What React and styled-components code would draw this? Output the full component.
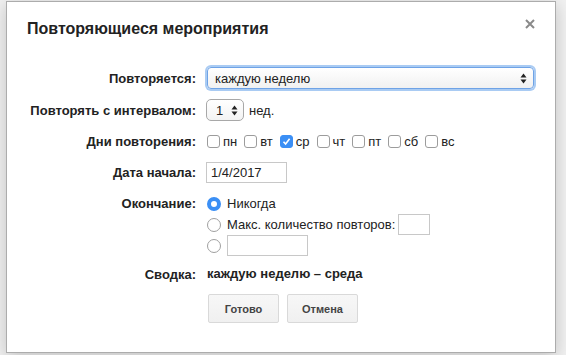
import styled, { createGlobalStyle } from 'styled-components'

const GlobalStyle = createGlobalStyle`
  html, body {
    margin: 0;
    padding: 0;
    background: #f1f1f1;
    font-family: "Liberation Sans", Arial, sans-serif;
  }
`

const days = [
  { label: 'пн', checked: false },
  { label: 'вт', checked: false },
  { label: 'ср', checked: true },
  { label: 'чт', checked: false },
  { label: 'пт', checked: false },
  { label: 'сб', checked: false },
  { label: 'вс', checked: false },
]

const Arrows = () => (
  <svg width="7" height="11" viewBox="0 0 7 11">
    <path d="M3.5 0.5 L6.5 4.5 L0.5 4.5 Z" fill="#222" />
    <path d="M3.5 10.5 L6.5 6.5 L0.5 6.5 Z" fill="#222" />
  </svg>
)

function App() {
  return (
    <>
      <GlobalStyle />
      <Page>
        <Dialog>
          <Header>
            <Title>Повторяющиеся мероприятия</Title>
            <Close>
              <svg width="10" height="10" viewBox="0 0 10 10">
                <path d="M1 1 L9 9 M9 1 L1 9" stroke="#8a8a8a" strokeWidth="2" />
              </svg>
            </Close>
          </Header>
          <Form>
            <Label>Повторяется:</Label>
            <Select>
              <span>каждую неделю</span>
              <Arrows />
            </Select>

            <Label>Повторять с интервалом:</Label>
            <Inline>
              <NumberSelect>
                <span>1</span>
                <Arrows />
              </NumberSelect>
              <Text>нед.</Text>
            </Inline>

            <Label>Дни повторения:</Label>
            <Days>
              {days.map((d) => (
                <Day key={d.label}>
                  <Checkbox $checked={d.checked}>
                    {d.checked && (
                      <svg width="9" height="9" viewBox="0 0 9 9">
                        <path d="M1.5 4.8 L3.6 7 L7.6 1.8" stroke="#fff" strokeWidth="1.6" fill="none" />
                      </svg>
                    )}
                  </Checkbox>
                  <Text>{d.label}</Text>
                </Day>
              ))}
            </Days>

            <Label>Дата начала:</Label>
            <Inline>
              <TextInput $width={81}>1/4/2017</TextInput>
            </Inline>

            <Label $top>Окончание:</Label>
            <Ends>
              <EndLine>
                <Radio $checked />
                <Text>Никогда</Text>
              </EndLine>
              <EndLine>
                <Radio />
                <Text>Макс. количество повторов:</Text>
                <TextInput $width={32} $tight />
              </EndLine>
              <EndLine>
                <Radio />
                <TextInput $width={81} />
              </EndLine>
            </Ends>

            <Label>Сводка:</Label>
            <Summary>каждую неделю – среда</Summary>

            <span />
            <Buttons>
              <Button>Готово</Button>
              <Button>Отмена</Button>
            </Buttons>
          </Form>
        </Dialog>
      </Page>
    </>
  )
}

const Page = styled.div`
  width: 566px;
  height: 355px;
  padding: 1px 0 0 6px;
  box-sizing: border-box;
`

const Dialog = styled.div`
  width: 550px;
  height: 352px;
  box-sizing: border-box;
  background: #fff;
  border: 1px solid #acacac;
  box-shadow: 0 4px 16px rgba(0, 0, 0, 0.2);
`

const Header = styled.div`
  display: flex;
  justify-content: space-between;
  align-items: center;
  height: 42px;
  padding: 0 20px 0 20px;
`

const Title = styled.div`
  font-size: 16px;
  font-weight: bold;
  color: #222;
  padding-top: 12px;
`

const Close = styled.div`
  display: flex;
  align-items: center;
  margin-top: 1px;
`

const Form = styled.div`
  display: grid;
  grid-template-columns: 189px 1fr;
  column-gap: 10px;
  row-gap: 10px;
  padding: 23px 21px 0 0;
  font-size: 13px;
  color: #222;
`

const Label = styled.div`
  font-weight: bold;
  text-align: right;
  align-self: ${(p) => (p.$top ? 'start' : 'center')};
  line-height: ${(p) => (p.$top ? '21px' : 'normal')};
`

const Text = styled.span`
  font-size: 13px;
  color: #222;
`

const Inline = styled.div`
  display: flex;
  align-items: center;
  gap: 5px;
  height: 22px;
`

const Select = styled.div`
  display: flex;
  align-items: center;
  justify-content: space-between;
  height: 20px;
  padding: 0 6px 0 7px;
  border: 1px solid #6fa3e6;
  border-radius: 4px;
  background: linear-gradient(#fff, #f1f1f1);
  box-shadow: 0 0 0 2px #a9cbf3;
  margin-left: 1px;
`

const NumberSelect = styled.div`
  display: flex;
  align-items: center;
  justify-content: space-between;
  box-sizing: border-box;
  width: 38px;
  height: 22px;
  padding: 0 5px 0 9px;
  border: 1px solid #a8a8a8;
  border-radius: 5px;
  background: linear-gradient(#fff, #f3f3f3);
`

const Days = styled.div`
  display: flex;
  align-items: center;
  height: 20px;
  gap: 7px;
  padding-left: 1px;
`

const Day = styled.div`
  display: flex;
  align-items: center;
  gap: 3px;
`

const Checkbox = styled.span`
  display: flex;
  align-items: center;
  justify-content: center;
  box-sizing: border-box;
  width: 13px;
  height: 13px;
  border-radius: 3px;
  border: 1px solid ${(p) => (p.$checked ? '#3b8ff5' : '#9c9c9c')};
  background: ${(p) => (p.$checked ? '#3b8ff5' : '#fff')};
`

const TextInput = styled.div`
  box-sizing: border-box;
  width: ${(p) => p.$width}px;
  height: 21px;
  line-height: 19px;
  padding: 0 4px;
  margin-left: ${(p) => (p.$tight ? '-3px' : '0')};
  border: 1px solid #c8c8c8;
  font-size: 13px;
  color: #222;
`

const Ends = styled.div`
  display: flex;
  flex-direction: column;
`

const EndLine = styled.div`
  display: flex;
  align-items: center;
  gap: 6px;
  height: 21px;
  padding-left: 1px;
`

const Radio = styled.span`
  box-sizing: border-box;
  width: 14px;
  height: 14px;
  border-radius: 50%;
  border: ${(p) => (p.$checked ? '4.5px solid #3b8ff5' : '1px solid #a0a0a0')};
  background: #fff;
`

const Summary = styled.div`
  font-weight: bold;
  height: 16px;
  line-height: 16px;
  padding-left: 1px;
`

const Buttons = styled.div`
  display: flex;
  gap: 8px;
  padding-left: 2px;
  margin-top: 2px;
`

const Button = styled.div`
  display: flex;
  align-items: center;
  justify-content: center;
  box-sizing: border-box;
  width: 71px;
  height: 29px;
  border: 1px solid #d9d9d9;
  border-radius: 2px;
  background: linear-gradient(#f7f7f7, #f0f0f0);
  font-size: 11px;
  font-weight: bold;
  color: #444;
`

export default App
